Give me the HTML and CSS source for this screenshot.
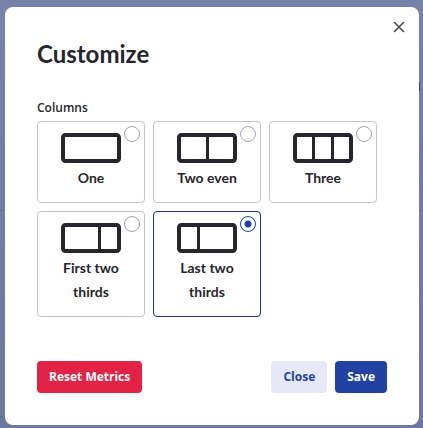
FILE: index.html
```html
<!DOCTYPE html>
<html lang="en">
<head>
  <meta charset="utf-8">
  <meta name="viewport" content="width=device-width, initial-scale=1">
  <title>Customize</title>
  <link rel="stylesheet" href="styles.css">
</head>
<body>
  <div class="modal" role="dialog" aria-labelledby="modal-title">
    <button class="close-icon" type="button" aria-label="Close dialog">
      <svg width="12" height="12" viewBox="0 0 12 12"><path d="M1.5 1.5l9 9M10.5 1.5l-9 9" fill="none" stroke="#4b4b52" stroke-width="1.6" stroke-linecap="round"/></svg>
    </button>

    <h1 id="modal-title">Customize</h1>

    <form>
      <fieldset>
        <legend>Columns</legend>
        <div class="options">
          <label class="option">
            <input type="radio" name="columns" value="one">
            <svg class="layout" viewBox="0 0 60 30"><rect x="2" y="2" width="56" height="26" rx="2.5"/></svg>
            <span>One</span>
          </label>
          <label class="option">
            <input type="radio" name="columns" value="two-even">
            <svg class="layout" viewBox="0 0 60 30"><rect x="2" y="2" width="56" height="26" rx="2.5"/><path d="M30.5 2v26"/></svg>
            <span>Two even</span>
          </label>
          <label class="option">
            <input type="radio" name="columns" value="three">
            <svg class="layout" viewBox="0 0 60 30"><rect x="2" y="2" width="56" height="26" rx="2.5"/><path d="M20.5 2v26M39.5 2v26"/></svg>
            <span>Three</span>
          </label>
          <label class="option">
            <input type="radio" name="columns" value="first-two-thirds">
            <svg class="layout" viewBox="0 0 60 30"><rect x="2" y="2" width="56" height="26" rx="2.5"/><path d="M38.5 2v26"/></svg>
            <span>First two thirds</span>
          </label>
          <label class="option">
            <input type="radio" name="columns" value="last-two-thirds" checked>
            <svg class="layout" viewBox="0 0 60 30"><rect x="2" y="2" width="56" height="26" rx="2.5"/><path d="M21.5 2v26"/></svg>
            <span>Last two thirds</span>
          </label>
        </div>
      </fieldset>

      <div class="footer">
        <button class="button reset" type="reset">Reset Metrics</button>
        <button class="button close" type="button">Close</button>
        <button class="button save" type="submit">Save</button>
      </div>
    </form>
  </div>
</body>
</html>
```

FILE: styles.css
```css
* {
  box-sizing: border-box;
}

/* Dimmed page behind the modal */
body {
  margin: 0;
  padding: 7px 4px 3px 5px;
  min-height: 100vh;
  background:
    linear-gradient(#2b4a8c, #2b4a8c) right 3px top 82px / 1px 9px no-repeat,
    linear-gradient(#6070a0, #6070a0) 0 210px / 100% 1px no-repeat,
    linear-gradient(#7682a8, #6b799f);
  color: #26262c;
  font-family: "Open Sans", sans-serif;
  font-size: 12px;
}

/* Modal */
.modal {
  position: relative;
  padding: 32px;
  border-radius: 8px;
  background-color: #fff;
}

.close-icon {
  position: absolute;
  top: 8px;
  right: 8px;
  display: flex;
  align-items: center;
  justify-content: center;
  width: 24px;
  height: 24px;
  padding: 0;
  border: none;
  background: none;
  cursor: pointer;
}

h1 {
  margin: 0 0 30px;
  font-family: Lato, sans-serif;
  font-size: 24px;
  font-weight: 700;
  line-height: 30px;
}

/* Column options */
fieldset {
  margin: 0;
  padding: 0;
  border: none;
}

legend {
  padding: 0;
  margin-bottom: 4px;
  font-weight: 600;
  line-height: 18px;
}

.options {
  display: flex;
  flex-wrap: wrap;
  align-items: flex-start;
  gap: 8px;
}

.option {
  position: relative;
  display: flex;
  flex-direction: column;
  align-items: center;
  gap: 3px;
  width: 108px;
  padding: 11px 20px 12px;
  border: 1px solid #c1c4d6;
  border-radius: 4px;
  font-family: Lato, sans-serif;
  font-size: 14px;
  font-weight: 700;
  line-height: 24px;
  text-align: center;
  cursor: pointer;
}

.option:has(input:checked) {
  border-color: #1e3a80;
}

.option input {
  position: absolute;
  top: 4px;
  right: 4px;
  width: 16px;
  height: 16px;
  margin: 0;
  border: 1px solid #a0a4b4;
  border-radius: 50%;
  background-color: #fff;
  appearance: none;
}

.option input:checked {
  border-color: #2142a0;
  background-image: radial-gradient(circle, #2142a0 3px, transparent 4px);
}

.layout {
  width: 60px;
  height: 30px;
  fill: none;
  stroke: #26262c;
  stroke-width: 4;
}

.layout path {
  stroke-width: 3;
}

/* Footer */
.footer {
  display: flex;
  gap: 8px;
  margin-top: 44px;
}

.button {
  height: 32px;
  padding: 0 12px 2px;
  border: none;
  border-radius: 4px;
  font-family: inherit;
  font-size: 12px;
  font-weight: 700;
  cursor: pointer;
}

.reset {
  margin-right: auto;
  background-color: #e32345;
  color: #fff;
}

.close {
  background-color: #e6e8f7;
  color: #2142a0;
}

.save {
  background-color: #2142a0;
  color: #fff;
}
```
